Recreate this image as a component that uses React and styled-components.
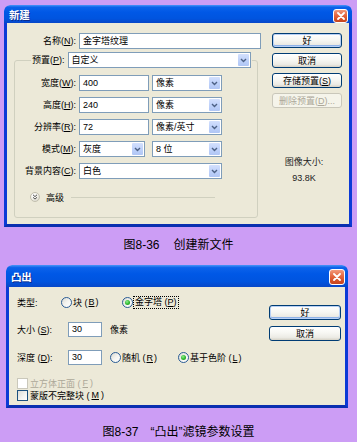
import React from 'react';
import styled, { createGlobalStyle } from 'styled-components';

const GlobalStyle = createGlobalStyle`
  html, body {
    margin: 0;
    padding: 0;
  }
  body {
    background: #cc9df5;
    font-family: "Liberation Sans", "Noto Sans CJK SC", sans-serif;
  }
`;

const Page = styled.div`
  width: 357px;
  height: 442px;
  padding-top: 5px;
  box-sizing: border-box;
  display: flex;
  flex-direction: column;
  overflow: hidden;
  background: #cc9df5;
`;

const Window = styled.div`
  margin-left: ${p => p.$left}px;
  margin-top: ${p => p.$top || 0}px;
  width: ${p => p.$width}px;
  height: ${p => p.$height}px;
  flex-shrink: 0;
  display: flex;
  flex-direction: column;
  box-sizing: border-box;
  border-radius: 6px 6px 0 0;
  overflow: hidden;
  font-size: 9px;
  color: #000;
`;

const TitleBar = styled.div`
  height: ${p => p.$height}px;
  flex-shrink: 0;
  display: flex;
  align-items: center;
  justify-content: space-between;
  padding: 0 ${p => p.$padRight}px 0 5px;
  box-sizing: border-box;
  background: linear-gradient(
    to bottom,
    #4a96f8 0%,
    #0c62ea 12%,
    #0058e6 40%,
    #0054df 75%,
    #0747c8 100%
  );
  border-radius: 6px 6px 0 0;
`;

const TitleText = styled.span`
  color: #fff;
  font-family: "Noto Sans CJK SC", sans-serif;
  font-weight: bold;
  font-size: 10.5px;
  text-shadow: 1px 1px 0 #0a2a8c;
  letter-spacing: -0.3px;
`;

const CloseButton = styled.span`
  align-self: flex-start;
  margin-top: 4px;
  width: ${p => p.$w}px;
  height: ${p => p.$h}px;
  box-sizing: border-box;
  border: 1px solid #fff;
  border-radius: 3px;
  background: linear-gradient(to bottom, #f29a7c 0%, #e4663f 45%, #d24e25 80%, #c44520 100%);
  display: flex;
  align-items: center;
  justify-content: center;
`;

const Frame = styled.div`
  flex: 1;
  display: flex;
  background: #ece9d8;
  border: 3px solid #0b3ad6;
  border-top: none;
  border-bottom-color: #0a2fb0;
  padding: ${p => p.$pad};
  gap: ${p => p.$gap}px;
`;

/* ---------- dialog 1 ---------- */

const LeftColumn = styled.div`
  width: ${p => (p.$width ? `${p.$width}px` : 'auto')};
  flex: ${p => (p.$width ? 'none' : 1)};
  display: flex;
  flex-direction: column;
`;

const RightColumn = styled.div`
  width: ${p => p.$width}px;
  padding-top: ${p => p.$top || 0}px;
  display: flex;
  flex-direction: column;
`;

const NameRow = styled.div`
  display: grid;
  grid-template-columns: 62px 182px;
  column-gap: 3px;
  align-items: center;
`;

const Label = styled.span`
  text-align: right;
  white-space: nowrap;
  line-height: 16px;
`;

const GroupBox = styled.fieldset`
  margin: 3px 0 0 0;
  padding: 0 0 14px 0;
  width: 244px;
  box-sizing: border-box;
  border: 1px solid #d0d0bf;
  border-radius: 3px;
`;

const Legend = styled.legend`
  margin-left: 16px;
  padding: 0 1px;
  display: flex;
  align-items: center;
  gap: 3px;
`;

const FormGrid = styled.div`
  margin-top: 7px;
  display: grid;
  grid-template-columns: 61px 70px 70px;
  column-gap: 3px;
  row-gap: 6px;
  align-items: center;
`;

const Field = styled.div`
  width: ${p => p.$width}px;
  height: ${p => p.$height || 16}px;
  box-sizing: border-box;
  border: 1px solid #7f9db9;
  background: #fff;
  padding: 0 3px;
  line-height: ${p => (p.$height || 16) - 2}px;
  white-space: nowrap;
  overflow: hidden;
`;

const SelectBox = styled.div`
  width: ${p => p.$width}px;
  height: 16px;
  box-sizing: border-box;
  border: 1px solid #7f9db9;
  background: #fff;
  display: flex;
  grid-column: ${p => (p.$span ? `span ${p.$span}` : 'auto')};
`;

const SelectText = styled.span`
  flex: 1;
  padding-left: 3px;
  line-height: 14px;
  white-space: nowrap;
`;

const DropButton = styled.span`
  width: 11px;
  margin: 1px;
  border-radius: 1px;
  background: linear-gradient(to bottom, #d3e0fd 0%, #bfd2fa 50%, #b0c6f5 100%);
  display: flex;
  align-items: center;
  justify-content: center;
`;

const AdvancedRow = styled.div`
  margin: 12px 42px 0 15px;
  height: 12px;
  display: flex;
  align-items: center;
  gap: 6px;
`;

const RoundIcon = styled.span`
  width: 10px;
  height: 10px;
  box-sizing: border-box;
  border-radius: 50%;
  border: 1px solid #c2bfae;
  background: radial-gradient(circle at 35% 30%, #ffffff 0%, #f3f2ec 45%, #cfccbc 100%);
  display: flex;
  align-items: center;
  justify-content: center;
`;

const Rule = styled.span`
  flex: 1;
  margin-left: 1px;
  height: 1px;
  background: #d0d0bf;
`;

const ButtonStack = styled.div`
  display: flex;
  flex-direction: column;
  gap: ${p => p.$gap}px;
`;

const Button = styled.div`
  width: ${p => p.$width}px;
  height: 15px;
  box-sizing: border-box;
  border: 1px solid ${p => (p.$disabled ? '#c9c7ba' : '#003c74')};
  border-radius: 3px;
  background: ${p =>
    p.$disabled
      ? '#f5f4ea'
      : 'linear-gradient(to bottom, #ffffff 0%, #f7f7f3 45%, #ecebe5 80%, #d6d2c6 100%)'};
  box-shadow: ${p =>
    p.$default ? 'inset 0 0 0 1px #b8d0f5, inset 0 -1px 0 1px #8fb2e8' : 'none'};
  color: ${p => (p.$disabled ? '#aca899' : '#000')};
  display: flex;
  align-items: center;
  justify-content: center;
  white-space: nowrap;
`;

const SizeInfo = styled.div`
  margin-top: 46px;
  padding-right: 6px;
  text-align: center;
  line-height: 16px;
  color: #222;
`;

/* ---------- dialog 2 ---------- */

const Row = styled.div`
  height: ${p => p.$height}px;
  margin-top: ${p => p.$top || 0}px;
  display: flex;
  align-items: center;
  white-space: nowrap;
`;

const RowLabel = styled.span`
  width: ${p => p.$width}px;
  flex-shrink: 0;
`;

const RadioItem = styled.span`
  width: ${p => (p.$width ? `${p.$width}px` : 'auto')};
  margin-left: ${p => p.$left || 0}px;
  display: inline-flex;
  align-items: center;
  gap: 1px;
`;

const RadioCircle = styled.span`
  width: 11px;
  height: 11px;
  flex-shrink: 0;
  box-sizing: border-box;
  border-radius: 50%;
  border: 1px solid #2a5c95;
  background: linear-gradient(135deg, #d9d8d0 0%, #f4f4f0 50%, #ffffff 100%);
  display: flex;
  align-items: center;
  justify-content: center;

  &::after {
    content: '';
    display: ${p => (p.$checked ? 'block' : 'none')};
    width: 5px;
    height: 5px;
    border-radius: 50%;
    background: radial-gradient(circle at 40% 35%, #8ef08e 0%, #2cb52c 55%, #1b8a1b 100%);
  }
`;

const Focus = styled.span`
  outline: 1px dotted #000;
  outline-offset: 0;
  padding: 0 1px;
  line-height: 11px;
`;

const Unit = styled.span`
  margin-left: 8px;
`;

const CheckRow = styled.div`
  height: 12px;
  margin-top: ${p => p.$top || 0}px;
  display: flex;
  align-items: center;
  gap: 2px;
  color: ${p => (p.$disabled ? '#aca899' : '#000')};
  white-space: nowrap;
`;

const CheckBox = styled.span`
  width: 11px;
  height: 11px;
  box-sizing: border-box;
  border: 1px solid ${p => (p.$disabled ? '#cac8bb' : '#1c5180')};
  background: ${p =>
    p.$disabled ? '#fff' : 'linear-gradient(135deg, #dcdcd7 0%, #f5f5f2 60%, #ffffff 100%)'};
`;

/* ---------- captions ---------- */

const Caption = styled.div`
  margin-top: ${p => p.$top}px;
  height: 16px;
  display: flex;
  justify-content: center;
  gap: ${p => p.$gap}px;
  font-size: 12px;
  line-height: 16px;
  color: #000;
  white-space: nowrap;
`;

const CloseX = () => (
  <svg width="8" height="8" viewBox="0 0 8 8">
    <path d="M1 1L7 7M7 1L1 7" stroke="#fff" strokeWidth="1.8" strokeLinecap="round" />
  </svg>
);

const Chevron = () => (
  <svg width="7" height="5" viewBox="0 0 7 5">
    <path d="M1 1l2.5 2.5L6 1" fill="none" stroke="#4d6185" strokeWidth="1.4" />
  </svg>
);

const DoubleChevron = () => (
  <svg width="6" height="6" viewBox="0 0 6 6">
    <path d="M1 0.8l2 1.8 2-1.8M1 3.3l2 1.8 2-1.8" fill="none" stroke="#3a3a3a" strokeWidth="0.9" />
  </svg>
);

const Select = ({ width, span, children }) => (
  <SelectBox $width={width} $span={span}>
    <SelectText>{children}</SelectText>
    <DropButton>
      <Chevron />
    </DropButton>
  </SelectBox>
);

const formRows = [
  { label: '宽度', key: 'W', value: '400', unit: '像素' },
  { label: '高度', key: 'H', value: '240', unit: '像素' },
  { label: '分辨率', key: 'R', value: '72', unit: '像素/英寸' },
];

const NewFileDialog = () => (
  <Window $left={4} $width={348} $height={222}>
    <TitleBar $height={18} $padRight={4}>
      <TitleText>新建</TitleText>
      <CloseButton $w={15} $h={14}>
        <CloseX />
      </CloseButton>
    </TitleBar>
    <Frame $pad="10px 7px 0 7px" $gap={10}>
      <LeftColumn $width={248}>
        <NameRow>
          <Label>名称(<u>N</u>):</Label>
          <Field $width={182}>金字塔纹理</Field>
        </NameRow>
        <GroupBox>
          <Legend>
            <Label>预置(<u>P</u>):</Label>
            <Select width={183}>自定义</Select>
          </Legend>
          <FormGrid>
            {formRows.map(r => (
              <React.Fragment key={r.key}>
                <Label>
                  {r.label}(<u>{r.key}</u>):
                </Label>
                <Field $width={70}>{r.value}</Field>
                <Select width={70}>{r.unit}</Select>
              </React.Fragment>
            ))}
            <Label>模式(<u>M</u>):</Label>
            <Select width={66}>灰度</Select>
            <Select width={70}>8 位</Select>
            <Label>背景内容(<u>C</u>):</Label>
            <Select width={143} span={2}>白色</Select>
          </FormGrid>
          <AdvancedRow>
            <RoundIcon>
              <DoubleChevron />
            </RoundIcon>
            <span>高级</span>
            <Rule />
          </AdvancedRow>
        </GroupBox>
      </LeftColumn>
      <RightColumn $width={70}>
        <ButtonStack $gap={5}>
          <Button $width={70} $default>好</Button>
          <Button $width={70}>取消</Button>
          <Button $width={70}>存储预置(<u>S</u>)</Button>
          <Button $width={70} $disabled>删除预置(<u>D</u>)...</Button>
        </ButtonStack>
        <SizeInfo>
          图像大小:
          <br />
          93.8K
        </SizeInfo>
      </RightColumn>
    </Frame>
  </Window>
);

const ExtrudeDialog = () => (
  <Window $left={6} $top={12} $width={342} $height={143}>
    <TitleBar $height={22} $padRight={3}>
      <TitleText>凸出</TitleText>
      <CloseButton $w={16} $h={16}>
        <CloseX />
      </CloseButton>
    </TitleBar>
    <Frame $pad="8px 4px 0 8px" $gap={0}>
      <LeftColumn>
        <Row $height={14}>
          <RowLabel $width={44}>类型:</RowLabel>
          <RadioItem $width={61}>
            <RadioCircle />
            块 (<u>B</u>)
          </RadioItem>
          <RadioItem>
            <RadioCircle $checked />
            <Focus>金字塔 (<u>P</u>)</Focus>
          </RadioItem>
        </Row>
        <Row $height={15} $top={13}>
          <RowLabel $width={51}>大小 (<u>S</u>):</RowLabel>
          <Field $width={34} $height={15}>30</Field>
          <Unit>像素</Unit>
        </Row>
        <Row $height={15} $top={13}>
          <RowLabel $width={51}>深度 (<u>D</u>):</RowLabel>
          <Field $width={34} $height={15}>30</Field>
          <RadioItem $width={68} $left={8}>
            <RadioCircle />
            随机 (<u>R</u>)
          </RadioItem>
          <RadioItem>
            <RadioCircle $checked />
            基于色阶 (<u>L</u>)
          </RadioItem>
        </Row>
        <CheckRow $top={12} $disabled>
          <CheckBox $disabled />
          立方体正面 (<u>F</u>)
        </CheckRow>
        <CheckRow>
          <CheckBox />
          蒙版不完整块 (<u>M</u>)
        </CheckRow>
      </LeftColumn>
      <RightColumn $width={72} $top={10}>
        <ButtonStack $gap={6}>
          <Button $width={72} $default>好</Button>
          <Button $width={72}>取消</Button>
        </ButtonStack>
      </RightColumn>
    </Frame>
  </Window>
);

export default function App() {
  return (
    <>
      <GlobalStyle />
      <Page>
        <NewFileDialog />
        <Caption $top={10} $gap={14}>
          <span>图8-36</span>
          <span>创建新文件</span>
        </Caption>
        <ExtrudeDialog />
        <Caption $top={16} $gap={12}>
          <span>图8-37</span>
          <span>“凸出”滤镜参数设置</span>
        </Caption>
      </Page>
    </>
  );
}
